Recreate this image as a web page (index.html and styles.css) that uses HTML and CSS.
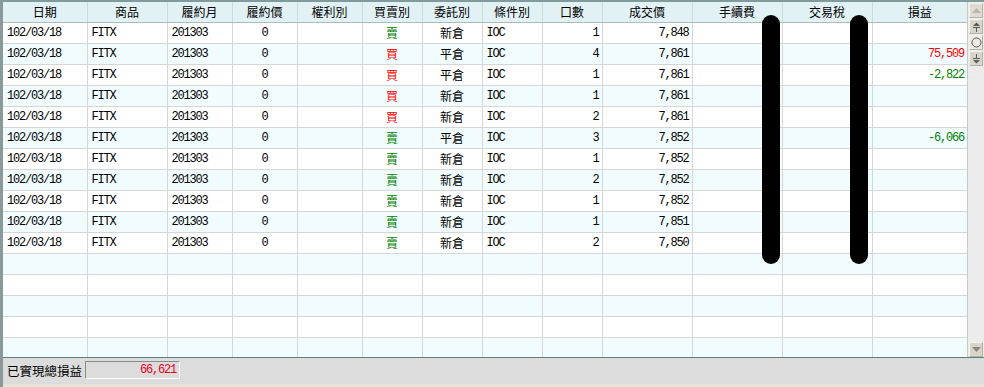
FILE: index.html
```html
<!DOCTYPE html>
<html lang="zh-Hant">
<head>
<meta charset="utf-8">
<title>已實現損益</title>
<link rel="stylesheet" href="styles.css">
</head>
<body>
<div class="frame">
  <div class="grid-box">
    <div class="table-area">
      <table class="grid">
        <colgroup>
          <col class="w84"><col class="w80"><col class="w65"><col class="w65"><col class="w65">
          <col class="w60"><col class="w60"><col class="w60"><col class="w60">
          <col class="w90"><col class="w90"><col class="w90"><col class="w95">
        </colgroup>
        <thead>
          <tr><th>日期</th><th>商品</th><th>履約月</th><th>履約價</th><th>權利別</th><th>買賣別</th><th>委託別</th><th>條件別</th><th>口數</th><th>成交價</th><th>手續費</th><th>交易稅</th><th>損益</th></tr>
        </thead>
        <tbody>
          <tr><td class="l m">102/03/18</td><td class="l m">FITX</td><td class="l m">201303</td><td class="c m">0</td><td></td><td class="c sell">賣</td><td class="c">新倉</td><td class="l m">IOC</td><td class="r m">1</td><td class="r m">7,848</td><td></td><td></td><td class="r m"></td></tr>
          <tr><td class="l m">102/03/18</td><td class="l m">FITX</td><td class="l m">201303</td><td class="c m">0</td><td></td><td class="c buy">買</td><td class="c">平倉</td><td class="l m">IOC</td><td class="r m">4</td><td class="r m">7,861</td><td></td><td></td><td class="r m red">75,509</td></tr>
          <tr><td class="l m">102/03/18</td><td class="l m">FITX</td><td class="l m">201303</td><td class="c m">0</td><td></td><td class="c buy">買</td><td class="c">平倉</td><td class="l m">IOC</td><td class="r m">1</td><td class="r m">7,861</td><td></td><td></td><td class="r m green">-2,822</td></tr>
          <tr><td class="l m">102/03/18</td><td class="l m">FITX</td><td class="l m">201303</td><td class="c m">0</td><td></td><td class="c buy">買</td><td class="c">新倉</td><td class="l m">IOC</td><td class="r m">1</td><td class="r m">7,861</td><td></td><td></td><td class="r m"></td></tr>
          <tr><td class="l m">102/03/18</td><td class="l m">FITX</td><td class="l m">201303</td><td class="c m">0</td><td></td><td class="c buy">買</td><td class="c">新倉</td><td class="l m">IOC</td><td class="r m">2</td><td class="r m">7,861</td><td></td><td></td><td class="r m"></td></tr>
          <tr><td class="l m">102/03/18</td><td class="l m">FITX</td><td class="l m">201303</td><td class="c m">0</td><td></td><td class="c sell">賣</td><td class="c">平倉</td><td class="l m">IOC</td><td class="r m">3</td><td class="r m">7,852</td><td></td><td></td><td class="r m green">-6,066</td></tr>
          <tr><td class="l m">102/03/18</td><td class="l m">FITX</td><td class="l m">201303</td><td class="c m">0</td><td></td><td class="c sell">賣</td><td class="c">新倉</td><td class="l m">IOC</td><td class="r m">1</td><td class="r m">7,852</td><td></td><td></td><td class="r m"></td></tr>
          <tr><td class="l m">102/03/18</td><td class="l m">FITX</td><td class="l m">201303</td><td class="c m">0</td><td></td><td class="c sell">賣</td><td class="c">新倉</td><td class="l m">IOC</td><td class="r m">2</td><td class="r m">7,852</td><td></td><td></td><td class="r m"></td></tr>
          <tr><td class="l m">102/03/18</td><td class="l m">FITX</td><td class="l m">201303</td><td class="c m">0</td><td></td><td class="c sell">賣</td><td class="c">新倉</td><td class="l m">IOC</td><td class="r m">1</td><td class="r m">7,852</td><td></td><td></td><td class="r m"></td></tr>
          <tr><td class="l m">102/03/18</td><td class="l m">FITX</td><td class="l m">201303</td><td class="c m">0</td><td></td><td class="c sell">賣</td><td class="c">新倉</td><td class="l m">IOC</td><td class="r m">1</td><td class="r m">7,851</td><td></td><td></td><td class="r m"></td></tr>
          <tr><td class="l m">102/03/18</td><td class="l m">FITX</td><td class="l m">201303</td><td class="c m">0</td><td></td><td class="c sell">賣</td><td class="c">新倉</td><td class="l m">IOC</td><td class="r m">2</td><td class="r m">7,850</td><td></td><td></td><td class="r m"></td></tr>
          <tr><td></td><td></td><td></td><td></td><td></td><td></td><td></td><td></td><td></td><td></td><td></td><td></td><td></td></tr>
          <tr><td></td><td></td><td></td><td></td><td></td><td></td><td></td><td></td><td></td><td></td><td></td><td></td><td></td></tr>
          <tr><td></td><td></td><td></td><td></td><td></td><td></td><td></td><td></td><td></td><td></td><td></td><td></td><td></td></tr>
          <tr><td></td><td></td><td></td><td></td><td></td><td></td><td></td><td></td><td></td><td></td><td></td><td></td><td></td></tr>
          <tr><td></td><td></td><td></td><td></td><td></td><td></td><td></td><td></td><td></td><td></td><td></td><td></td><td></td></tr>
        </tbody>
      </table>
      <div class="redact redact-a"></div>
      <div class="redact redact-b"></div>
    </div>
    <div class="scrollbar">
      <div class="sb-btn sb-disabled">
        <svg width="11" height="7" viewBox="0 0 11 7"><path d="M1 6 L5.5 1 L10 6 Z" fill="#bab6aa"/></svg>
      </div>
      <div class="sb-btn">
        <svg width="9" height="10" viewBox="0 0 9 10"><path d="M1 4 L4.5 0.5 L8 4 Z" fill="#5a5a5a"/><path d="M1 5.5h7" stroke="#5a5a5a" stroke-width="1"/><path d="M4.5 6v4" stroke="#5a5a5a" stroke-width="1"/></svg>
      </div>
      <div class="sb-thumb">
        <svg width="11" height="11" viewBox="0 0 11 11"><circle cx="5.5" cy="5.5" r="4.5" fill="none" stroke="#555" stroke-width="1"/></svg>
      </div>
      <div class="sb-btn">
        <svg width="9" height="10" viewBox="0 0 9 10"><path d="M4.5 0v4" stroke="#5a5a5a" stroke-width="1"/><path d="M1 4.5h7" stroke="#5a5a5a" stroke-width="1"/><path d="M1 6 L4.5 9.5 L8 6 Z" fill="#5a5a5a"/></svg>
      </div>
      <div class="sb-track"></div>
      <div class="sb-btn">
        <svg width="11" height="7" viewBox="0 0 11 7"><path d="M1 1 L5.5 6 L10 1 Z" fill="#8a877e"/></svg>
      </div>
    </div>
  </div>
  <div class="status">
    <span class="status-label">已實現總損益</span>
    <span class="status-box">66,621</span>
  </div>
  <div class="footer-strip"></div>
</div>
</body>
</html>
```
FILE: styles.css
```css
html, body {
  margin: 0;
  padding: 0;
  background: #e6e6d8;
}
body {
  width: 984px;
  height: 387px;
  overflow: hidden;
  font-family: "Noto Sans CJK TC", "Liberation Sans", sans-serif;
  font-size: 12px;
  color: #000;
}
.frame {
  display: flex;
  flex-direction: column;
  width: 984px;
  height: 387px;
  border-left: 3px solid #8a9a9a;
  box-sizing: border-box;
}
.grid-box {
  display: flex;
  height: 358px;
  border-top: 2px solid #7f9b9b;
  border-bottom: 1px solid #5f7f7f;
  box-sizing: border-box;
  background: #fff;
}
.table-area {
  position: relative;
  width: 964px;
  height: 355px;
  overflow: hidden;
  flex: none;
}
.grid {
  border-collapse: collapse;
  table-layout: fixed;
  width: 964px;
}
.w84 { width: 84px; }
.w80 { width: 80px; }
.w65 { width: 65px; }
.w60 { width: 60px; }
.w90 { width: 90px; }
.w95 { width: 95px; }
.grid th {
  height: 20px;
  padding: 0;
  background: #e2f1f4;
  font-weight: normal;
  text-align: center;
  line-height: 20px;
  border-right: 1px solid #cfdada;
  border-bottom: 1px solid #a9bdbd;
  white-space: nowrap;
}
.grid td {
  height: 20px;
  padding: 0 4px;
  line-height: 20px;
  border-right: 1px solid #d6d6d6;
  border-bottom: 1px solid #d6d6d6;
  white-space: nowrap;
  overflow: hidden;
}
.grid tbody tr:nth-child(odd) td { background: #ffffff; }
.grid tbody tr:nth-child(even) td { background: #f0fcfe; }
.grid th:last-child, .grid td:last-child { border-right: none; }
.l { text-align: left; }
.c { text-align: center; }
.r { text-align: right; }
.m {
  font-family: "Liberation Mono", "DejaVu Sans Mono", monospace;
  letter-spacing: -1.2px;
}
.grid td.r.m { padding-right: 3px; }
.sell { color: #008000; }
.buy { color: #ff0000; }
.red { color: #ff0000; }
.green { color: #008000; }
.redact {
  position: absolute;
  top: 13px;
  width: 18px;
  height: 249px;
  background: #000;
  border-radius: 9px;
}
.redact-a { left: 759px; }
.redact-b { left: 847px; }
.scrollbar {
  display: flex;
  flex-direction: column;
  gap: 1px;
  width: 17px;
  height: 355px;
  background: #ececec;
  border-left: 1px solid #c8c8c8;
  box-sizing: border-box;
  padding: 1px 1px 0 1px;
}
.sb-btn, .sb-thumb {
  flex: none;
  height: 13px;
  display: flex;
  align-items: center;
  justify-content: center;
  background: #d9d5c9;
  border-top: 1px solid #f4f2ec;
  border-left: 1px solid #f4f2ec;
  border-bottom: 1px solid #b4b0a4;
  border-right: 1px solid #b4b0a4;
}
.sb-disabled { background: #e0dcd1; }
.sb-thumb {
  background: #ecebe6;
}
.sb-track { flex: 1; }
.status {
  display: flex;
  align-items: center;
  height: 26px;
  background: #dcdcdc;
  padding-left: 4px;
  gap: 3px;
}
.status-label {
  font-size: 12.5px;
  line-height: 18px;
}
.status-box {
  width: 90px;
  height: 16px;
  line-height: 16px;
  padding-right: 3px;
  text-align: right;
  color: #e8001c;
  font-family: "Liberation Mono", "DejaVu Sans Mono", monospace;
  letter-spacing: -1.2px;
  border-top: 1px solid #8a8a8a;
  border-left: 1px solid #8a8a8a;
  border-bottom: 1px solid #ffffff;
  border-right: 1px solid #ffffff;
  margin-top: -2px;
}
.footer-strip {
  height: 3px;
  background: #e6e6d8;
}
```
